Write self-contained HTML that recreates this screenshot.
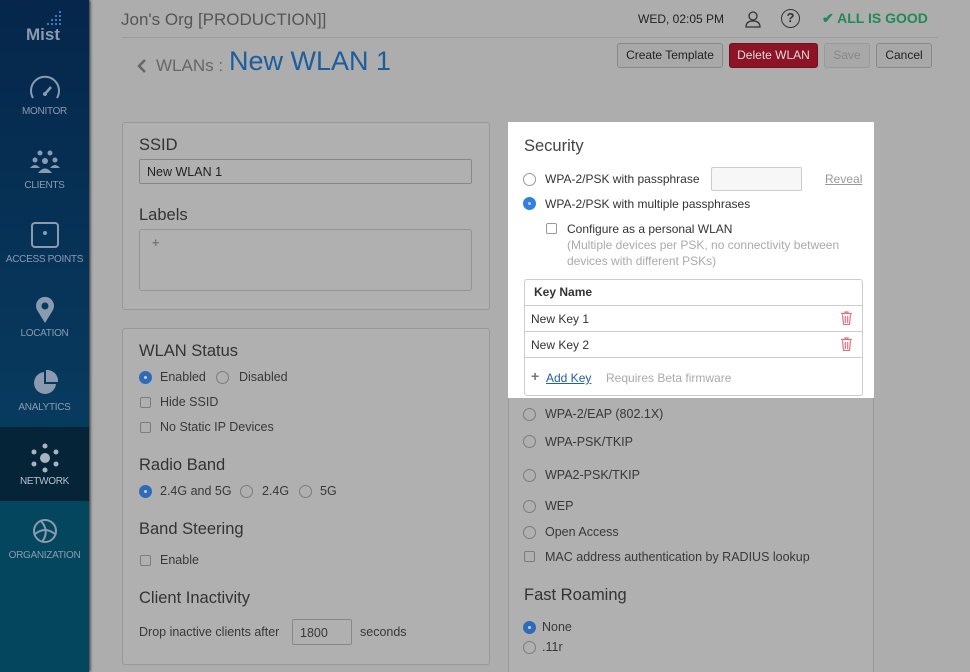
<!DOCTYPE html>
<html><head><meta charset="utf-8"><style>
*{box-sizing:border-box;margin:0;padding:0}
html,body{width:970px;height:672px;overflow:hidden}
body{position:relative;background:#adadad;font-family:"Liberation Sans",Arial,sans-serif;color:#383838;font-size:12.5px}
.a{position:absolute;white-space:nowrap}
#sb{position:absolute;left:0;top:0;width:89px;height:672px;background:linear-gradient(#06264b,#073a5e 60%,#05465f);box-shadow:1px 0 3px #222}
.nav{position:absolute;left:0;width:89px;text-align:center;font-size:10px;color:#8a9bb0;letter-spacing:-0.3px}
.panel{position:absolute;background:#b0b0b0;border:1px solid #989898;border-radius:3px}
.h{position:absolute;font-size:16.5px;color:#333;white-space:nowrap}
.r{position:absolute;width:13px;height:13px;border:1px solid #7c7c7c;border-radius:50%}
.r.on{background:#2e6bb8;border-color:#2e6bb8}
.r.on:after{content:"";position:absolute;left:4px;top:4px;width:3px;height:3px;background:#ccc;border-radius:50%}
.c{position:absolute;width:11px;height:11px;border:1px solid #7c7c7c;border-radius:2px}
.btn{position:absolute;top:43px;height:25px;border:1px solid #888;border-radius:3px;background:#a8a8a8;font-size:12px;text-align:center;line-height:23px;color:#222}
.w .r{border-color:#999}
.w .c{border-color:#999}
</style></head><body>
<div id="sb">
 <svg class="a" style="left:47px;top:11px" width="16" height="18" viewBox="0 0 16 18"><g fill="#3c7ac0"><rect x="12" y="0" width="2" height="2"/><rect x="12" y="4" width="2" height="2"/><rect x="8" y="4" width="2" height="2"/><rect x="12" y="8" width="2" height="2"/><rect x="8" y="8" width="2" height="2"/><rect x="4" y="8" width="2" height="2"/><rect x="12" y="12" width="2" height="2"/><rect x="8" y="12" width="2" height="2"/><rect x="4" y="12" width="2" height="2"/><rect x="0" y="12" width="2" height="2"/></g></svg>
 <div class="a" style="left:26px;top:25px;font-size:17px;font-weight:bold;color:#8a9bb0">Mist</div>
 <svg class="a" style="left:28px;top:74px" width="34" height="28" viewBox="0 0 34 28"><path d="M5 24A14 14 0 1 1 29 24" fill="none" stroke="#8a9bb0" stroke-width="2"/><path d="M17 20L23 13" stroke="#8a9bb0" stroke-width="2.5"/><circle cx="17" cy="20" r="2" fill="#8a9bb0"/></svg>
 <div class="nav" style="top:106px">MONITOR</div>
 <svg class="a" style="left:29px;top:150px" width="32" height="24" viewBox="0 0 32 24"><g fill="#8a9bb0"><circle cx="11" cy="3" r="2.5"/><circle cx="21" cy="3" r="2.5"/><circle cx="6" cy="10" r="2.5"/><circle cx="26" cy="10" r="2.5"/><circle cx="16" cy="11" r="3"/><path d="M1 18q5-6 10 0zM21 18q5-6 10 0zM9 23q7-9 14 0z"/></g></svg>
 <div class="nav" style="top:180px">CLIENTS</div>
 <div class="a" style="left:31px;top:222px;width:28px;height:26px;border:2px solid #8a9bb0;border-radius:4px"></div>
 <div class="a" style="left:43px;top:231px;width:4px;height:4px;background:#8a9bb0;border-radius:50%"></div>
 <div class="nav" style="top:254px">ACCESS POINTS</div>
 <svg class="a" style="left:35px;top:296px" width="20" height="28" viewBox="0 0 20 28"><path d="M10 27L2 14A9 9 0 1 1 18 14Z" fill="#8a9bb0"/><circle cx="10" cy="10" r="3.5" fill="#073a5e"/></svg>
 <div class="nav" style="top:328px">LOCATION</div>
 <svg class="a" style="left:32px;top:370px" width="26" height="26" viewBox="0 0 26 26"><path d="M12 2A11 11 0 1 0 24 14H12Z" fill="#8a9bb0"/><path d="M14 0A11 11 0 0 1 26 12H14Z" fill="#8a9bb0"/></svg>
 <div class="nav" style="top:402px">ANALYTICS</div>
 <div class="a" style="left:0;top:427px;width:89px;height:74px;background:#052438"></div>
 <svg class="a" style="left:30px;top:443px" width="30" height="30" viewBox="0 0 30 30"><g fill="#aab4c0"><circle cx="15" cy="15" r="5"/><circle cx="15" cy="3" r="2.5"/><circle cx="15" cy="27" r="2.5"/><circle cx="4" cy="9" r="2.5"/><circle cx="26" cy="9" r="2.5"/><circle cx="4" cy="21" r="2.5"/><circle cx="26" cy="21" r="2.5"/></g></svg>
 <div class="nav" style="top:476px;color:#b8c2cc">NETWORK</div>
 <div class="a" style="left:0;top:501px;width:89px;height:171px;background:#05465f"></div>
 <svg class="a" style="left:32px;top:518px" width="26" height="26" viewBox="0 0 26 26"><g fill="none" stroke="#8a9bb0" stroke-width="2"><circle cx="13" cy="13" r="11"/><path d="M3 16Q13 8 23 16M9 3Q18 13 10 24"/></g></svg>
 <div class="nav" style="top:550px">ORGANIZATION</div>
</div>

<div class="a" style="left:121px;top:10px;font-size:17px;color:#555">Jon's Org [PRODUCTION]]</div>
<div class="a" style="left:122px;top:37px;width:816px;height:1px;background:#9c9c9c"></div>
<div class="a" style="left:638px;top:12px;font-size:12px;color:#222">WED, 02:05 PM</div>
<svg class="a" style="left:744px;top:10px" width="18" height="18" viewBox="0 0 18 18"><g fill="none" stroke="#333" stroke-width="1.3"><circle cx="9" cy="6" r="4"/><path d="M2 17q0-6 7-6t7 6z"/></g></svg>
<div class="a" style="left:781px;top:9px;width:19px;height:19px;border:1.5px solid #333;border-radius:50%;text-align:center;font-weight:bold;font-size:13px;line-height:16px;color:#333">?</div>
<div class="a" style="left:822px;top:10px;font-size:14px;font-weight:bold;color:#1f8a55">✔ ALL IS GOOD</div>
<svg class="a" style="left:137px;top:59px" width="10" height="14" viewBox="0 0 10 14"><path d="M8 1L2 7l6 6" fill="none" stroke="#666" stroke-width="2.5"/></svg>
<div class="a" style="left:156px;top:56px;font-size:17px;color:#666">WLANs :</div>
<div class="a" style="left:229px;top:46px;font-size:27px;color:#1c5d9e">New WLAN 1</div>
<div class="btn" style="left:617px;width:106px">Create Template</div>
<div class="btn" style="left:729px;width:89px;background:#8c1426;border-color:#701020;color:#ddd">Delete WLAN</div>
<div class="btn" style="left:824px;width:46px;color:#888;border-color:#999">Save</div>
<div class="btn" style="left:876px;width:56px">Cancel</div>

<div class="panel" style="left:122px;top:122px;width:368px;height:188px"></div>
<div class="h" style="left:139px;top:136px">SSID</div>
<div class="a" style="left:139px;top:159px;width:333px;height:25px;border:1px solid #888;border-radius:2px;padding:5px 7px;color:#222">New WLAN 1</div>
<div class="h" style="left:139px;top:206px">Labels</div>
<div class="a" style="left:139px;top:229px;width:333px;height:62px;border:1px solid #959595;border-radius:3px;padding:6px 12px;color:#777;font-weight:bold">+</div>

<div class="panel" style="left:122px;top:328px;width:368px;height:337px"></div>
<div class="h" style="left:139px;top:342px">WLAN Status</div>
<div class="r on" style="left:139px;top:371px"></div><div class="a" style="left:160px;top:370px">Enabled</div>
<div class="r" style="left:216px;top:371px"></div><div class="a" style="left:239px;top:370px">Disabled</div>
<div class="c" style="left:140px;top:397px"></div><div class="a" style="left:160px;top:395px">Hide SSID</div>
<div class="c" style="left:140px;top:422px"></div><div class="a" style="left:160px;top:420px">No Static IP Devices</div>
<div class="h" style="left:139px;top:456px">Radio Band</div>
<div class="r on" style="left:139px;top:485px"></div><div class="a" style="left:160px;top:484px">2.4G and 5G</div>
<div class="r" style="left:240px;top:485px"></div><div class="a" style="left:262px;top:484px">2.4G</div>
<div class="r" style="left:299px;top:485px"></div><div class="a" style="left:320px;top:484px">5G</div>
<div class="h" style="left:139px;top:520px">Band Steering</div>
<div class="c" style="left:140px;top:555px"></div><div class="a" style="left:160px;top:553px">Enable</div>
<div class="h" style="left:139px;top:589px">Client Inactivity</div>
<div class="a" style="left:139px;top:625px">Drop inactive clients after</div>
<div class="a" style="left:292px;top:619px;width:60px;height:26px;border:1px solid #888;border-radius:2px;padding:6px 7px">1800</div>
<div class="a" style="left:360px;top:625px">seconds</div>

<div class="panel" style="left:508px;top:122px;width:366px;height:560px;border-radius:3px 3px 0 0"></div>
<div class="r" style="left:523px;top:408px"></div><div class="a" style="left:545px;top:407px">WPA-2/EAP (802.1X)</div>
<div class="r" style="left:523px;top:435px"></div><div class="a" style="left:545px;top:435px">WPA-PSK/TKIP</div>
<div class="r" style="left:523px;top:469px"></div><div class="a" style="left:545px;top:468px">WPA2-PSK/TKIP</div>
<div class="r" style="left:523px;top:500px"></div><div class="a" style="left:545px;top:499px">WEP</div>
<div class="r" style="left:523px;top:526px"></div><div class="a" style="left:545px;top:525px">Open Access</div>
<div class="c" style="left:524px;top:551px"></div><div class="a" style="left:545px;top:550px">MAC address authentication by RADIUS lookup</div>
<div class="h" style="left:524px;top:586px">Fast Roaming</div>
<div class="r on" style="left:523px;top:621px"></div><div class="a" style="left:542px;top:620px">None</div>
<div class="r" style="left:523px;top:641px"></div><div class="a" style="left:542px;top:640px">.11r</div>

<div class="a w" style="left:508px;top:122px;width:366px;height:276px;background:#fff">
 <div class="h" style="left:16px;top:15px;color:#444">Security</div>
 <div class="r" style="left:15px;top:51px"></div><div class="a" style="left:37px;top:50px;color:#333;font-size:12px">WPA-2/PSK with passphrase</div>
 <div class="a" style="left:203px;top:45px;width:91px;height:24px;border:1px solid #ccc;border-radius:2px;background:#f7f7f7"></div>
 <div class="a" style="left:317px;top:50px;font-size:12px;color:#999;text-decoration:underline">Reveal</div>
 <div class="r on" style="left:15px;top:75px;background:#2f80e0;border-color:#2f80e0"></div><div class="a" style="left:37px;top:75px;color:#333;font-size:12px">WPA-2/PSK with multiple passphrases</div>
 <div class="c" style="left:38px;top:101px"></div><div class="a" style="left:59px;top:100px;color:#333;font-size:12px">Configure as a personal WLAN</div>
 <div class="a" style="left:59px;top:116px;font-size:12px;color:#aaa">(Multiple devices per PSK, no connectivity between</div>
 <div class="a" style="left:59px;top:132px;font-size:12px;color:#aaa">devices with different PSKs)</div>
 <div class="a" style="left:16px;top:157px;width:339px;height:117px;border:1px solid #ccc;border-radius:3px"></div>
 <div class="a" style="left:26px;top:163px;font-weight:bold;color:#333;font-size:12px">Key Name</div>
 <div class="a" style="left:17px;top:183px;width:337px;height:1px;background:#ccc"></div>
 <div class="a" style="left:17px;top:209px;width:337px;height:1px;background:#ccc"></div>
 <div class="a" style="left:17px;top:235px;width:337px;height:1px;background:#ccc"></div>
 <div class="a" style="left:23px;top:190px;color:#333;font-size:12px">New Key 1</div>
 <div class="a" style="left:23px;top:216px;color:#333;font-size:12px">New Key 2</div>
 <svg class="a" style="left:333px;top:189px" width="11" height="14" viewBox="0 0 11 14"><g fill="none" stroke="#e07080" stroke-width="1.2"><path d="M0 2.5h11M4 2.5V1h3v1.5M1.5 3.5l1 10h6l1-10M4.3 5v7M6.7 5v7"/></g></svg>
 <svg class="a" style="left:333px;top:215px" width="11" height="14" viewBox="0 0 11 14"><g fill="none" stroke="#e07080" stroke-width="1.2"><path d="M0 2.5h11M4 2.5V1h3v1.5M1.5 3.5l1 10h6l1-10M4.3 5v7M6.7 5v7"/></g></svg>
 <div class="a" style="left:23px;top:246px;color:#777;font-weight:bold;font-size:14px">+</div>
 <div class="a" style="left:38px;top:249px;color:#1f5fa8;text-decoration:underline;font-size:12px">Add Key</div>
 <div class="a" style="left:98px;top:249px;color:#aaa;font-size:12px">Requires Beta firmware</div>
</div>
</body></html>
